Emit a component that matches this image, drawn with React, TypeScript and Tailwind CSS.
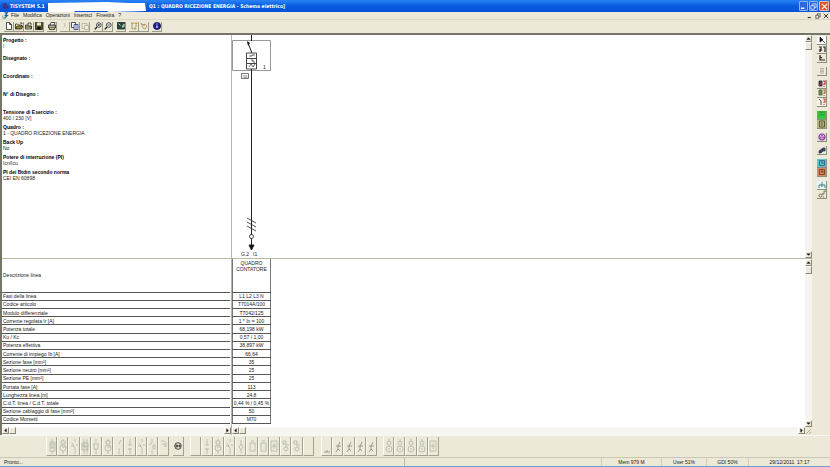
import type { ReactNode } from "react";

const raised =
  "border border-t-white border-l-white border-r-[#8a8778] border-b-[#8a8778] bg-[#ece9d8]";

function Glyph({ children, box = "0 0 8 8", className = "h-2 w-2" }: { children: ReactNode; box?: string; className?: string }) {
  return (
    <svg viewBox={box} className={className} fill="none" stroke="#222" strokeWidth="0.8" aria-hidden="true">
      {children}
    </svg>
  );
}

/* ---------- title bar and menu ---------- */

function TitleBar() {
  return (
    <header className="flex h-3 shrink-0 items-center bg-linear-to-b from-[#2a84f5] via-[#0a5be0] to-[#0552d8] pl-[2px] pr-px font-['DejaVu_Sans_Condensed','DejaVu_Sans',sans-serif] text-[5px] leading-3 font-bold text-white">
      <Glyph className="mr-[1px] h-2 w-[7px]">
        <path d="M1 1h4v3h2v3H2z" fill="#1c2f86" stroke="#3b3f9a" />
        <path d="M2 2l3 4" stroke="#a04a70" />
      </Glyph>
      <span className="w-[37px] whitespace-nowrap">TISYSTEM 5.1</span>
      <svg viewBox="0 0 100 12" className="h-3 w-[100px]" aria-hidden="true">
        <path d="M1 3L60 2L82 3L98 3L99 11L62 12L60 11L28 11L27 12L1 12z" fill="#fff" />
      </svg>
      <h1 className="ml-[2px] whitespace-nowrap">Q1 : QUADRO RICEZIONE ENERGIA - Schema elettrico]</h1>
      <div className="ml-auto flex gap-px">
        <button aria-label="Minimize" className="flex h-[10px] w-[9px] items-center justify-center rounded-[1px] border border-[#8db5f5] bg-[#2c66dc]">
          <Glyph className="h-[7px] w-[7px]"><path d="M1 6h4" stroke="#fff" strokeWidth="1.6" /></Glyph>
        </button>
        <button aria-label="Restore" className="flex h-[10px] w-[9px] items-center justify-center rounded-[1px] border border-[#8db5f5] bg-[#2c66dc]">
          <Glyph className="h-[7px] w-[7px]"><path d="M3 3V1h4v4H5M1 3h4v4H1z" stroke="#fff" /></Glyph>
        </button>
        <button aria-label="Close" className="flex h-[10px] w-[10px] items-center justify-center rounded-[1px] border border-[#f0b9a5] bg-[#dc5230]">
          <Glyph className="h-[7px] w-[7px]"><path d="M1 1l6 6M7 1L1 7" stroke="#fff" strokeWidth="1.3" /></Glyph>
        </button>
      </div>
    </header>
  );
}

const menus = ["File", "Modifica", "Operazioni", "Inserisci", "Finestra", "?"];

function MenuBar() {
  return (
    <nav className="flex h-2 shrink-0 items-center border-b border-[#dad6c2] pl-[2px] pr-px text-[5px] leading-[7px]">
      <Glyph className="mr-[2px] h-[7px] w-[7px]">
        <path d="M3 1h3L4 4h2L3 7" stroke="#1f5aa8" strokeWidth="1.4" />
        <path d="M1 4v3h3" stroke="#2a9a8a" />
      </Glyph>
      <div className="flex gap-[4px]">
        {menus.map((m) => (
          <button key={m} className="whitespace-nowrap">{m}</button>
        ))}
      </div>
      <div className="ml-auto flex gap-[2px]">
        <button aria-label="Minimize document"><Glyph className="h-[6px] w-[6px]"><path d="M1 6h4" strokeWidth="1.4" /></Glyph></button>
        <button aria-label="Restore document"><Glyph className="h-[6px] w-[6px]"><path d="M3 3V1h4v4H5M1 3h4v4H1z" /></Glyph></button>
        <button aria-label="Close document"><Glyph className="h-[6px] w-[6px]"><path d="M1 1l6 6M7 1L1 7" strokeWidth="1.2" /></Glyph></button>
      </div>
    </nav>
  );
}

/* ---------- main toolbar ---------- */

const toolGroups: { name: string; art: ReactNode }[][] = [
  [
    { name: "New", art: <path d="M1.5.5h3l2 2v5h-5zM4.500.5v2h2" fill="#fff" /> },
    { name: "Open", art: <><path d="M.5 7V2h2l1 1h3v1" fill="#f4f0a0" /><path d="M.5 7l1.500-3h6L6.500 7z" fill="#8f8a2a" /><path d="M5 1h2v1" /></> },
    { name: "Close", art: <><path d="M.5 7V3h2l1 1h3v3z" fill="#d8d48a" /><path d="M3 4V1h3v2M1 5h6" /></> },
    { name: "Save", art: <><path d="M.5.5h7v7h-7z" fill="#5b5a1c" /><path d="M2 .5h4v3H2z" fill="#e8e6d8" stroke="none" /><path d="M2.500 5h3v2.500h-3z" fill="#111" /></> },
  ],
  [{ name: "Print", art: <><path d="M2 3l1-2.500h4L6 3" fill="#fff" /><path d="M.5 3h7v3h-7z" fill="#a8a596" /><path d="M1.500 6v1.500h5V6" fill="#d8d070" /></> }],
  [
    { name: "Cut", art: <path d="M3 1l2 4M5 1L3 5M2 6h1M5 6h1" stroke="#c6c2b0" /> },
    { name: "Copy", art: <><path d="M.5.5h4v5h-4z" fill="#fff" /><path d="M3 2.500h4v5H3z" fill="#fff" stroke="#23347c" /><path d="M4 4h2M4 6h2" stroke="#23347c" /></> },
    { name: "Paste", art: <><path d="M1 1.500h5v5H1z" stroke="#b1ad9b" /><path d="M3.500 3.500h4v4h-4z" fill="#efede2" stroke="#b1ad9b" /></> },
  ],
  [
    { name: "Zoom in", art: <><circle cx="4.800" cy="3" r="2.300" fill="#e9f6f4" /><path d="M3 5L.8 7.400" strokeWidth="1.400" /><path d="M3.800 3h2M4.800 2v2" /></> },
    { name: "Zoom out", art: <><circle cx="4.800" cy="3" r="2.300" fill="#e9f6f4" /><path d="M3 5L.8 7.400" strokeWidth="1.400" /><path d="M3.800 3h2" /></> },
  ],
  [{ name: "View", art: <><path d="M.5.500h7v6.500h-7z" fill="#234c40" /><path d="M1.500 1.500l2 2M5 5h2V2z" stroke="#e5e8d8" /></> }],
  [
    { name: "Tree", art: <><path d="M1 1h3M2 1v6h1M5 4h2" stroke="#8c8560" /><path d="M5 1h2v1H5zM4 6h2v1H4z" fill="#dfc32c" stroke="#b49a22" /></> },
    { name: "Links", art: <><path d="M1 1l2 2 2-1 2 2-2 3-2-1z" stroke="#a68a50" /><path d="M3 3h2" stroke="#d45a3a" /></> },
  ],
  [{ name: "Info", art: <><circle cx="4" cy="4" r="3.600" fill="#1b1f8c" stroke="#10145c" /><path d="M4 3.400V6M4 1.600v1" stroke="#fff" strokeWidth="1.200" /></> }],
];

function ToolBar() {
  return (
    <div role="toolbar" aria-label="Standard" className="flex h-[15px] shrink-0 items-center gap-[3px] border-b-2 border-[#77756a] pl-1">
      {toolGroups.map((g, i) => (
        <div key={i} className="flex">
          {g.map((t) => (
            <button key={t.name} aria-label={t.name} className="flex h-[10px] w-[10px] items-center justify-center border-r border-b border-[#9c9987]">
              <Glyph>{t.art}</Glyph>
            </button>
          ))}
        </div>
      ))}
    </div>
  );
}

/* ---------- scroll bars ---------- */

const arrows = {
  left: "M5 2v4L3 4z",
  right: "M3 2v4l2-2z",
  up: "M2 5h4L4 3z",
  down: "M2 3h4L4 5z",
};

function Arrow({ dir }: { dir: keyof typeof arrows }) {
  return (
    <button aria-label={"Scroll " + dir} className={"flex h-[7px] w-[7px] shrink-0 items-center justify-center " + raised}>
      <Glyph className="h-[7px] w-[7px] shrink-0"><path d={arrows[dir]} fill="#111" stroke="#111" strokeWidth="0.4" /></Glyph>
    </button>
  );
}

function HScroll() {
  return (
    <div className="flex h-2 shrink-0 bg-[#f6f5ef]">
      <Arrow dir="left" />
      <div className={"h-[7px] w-[7px] " + raised} />
      <div className="ml-auto"><Arrow dir="right" /></div>
    </div>
  );
}

function VScroll() {
  return (
    <div className="flex w-[7px] shrink-0 flex-col bg-[#f6f5ef]">
      <Arrow dir="up" />
      <div className={"h-2 w-[7px] " + raised} />
      <div className="mt-auto"><Arrow dir="down" /></div>
    </div>
  );
}

/* ---------- project data ---------- */

const headerFields = [
  ["Progetto :", "I"],
  ["Disegnato :", ""],
  ["Coordinato :", ""],
  ["N° di Disegno :", ""],
];

const panelFields = [
  ["Tensione di Esercizio :", "400 / 230 [V]"],
  ["Quadro :", "1 - QUADRO RICEZIONE ENERGIA"],
  ["Back Up", "No"],
  ["Potere di interruzione (PI)", "Icn/Icu"],
  ["PI dei Btdin secondo norma", "CEI EN 60898"],
];

function ProjectInfo() {
  return (
    <dl className="pt-[2px] pl-px text-[5px] leading-[6px]">
      {headerFields.map(([k, v]) => (
        <div key={k} className="h-[18px]">
          <dt className="font-bold text-black">{k}</dt>
          <dd className="text-[#555]">{v}</dd>
        </div>
      ))}
      {panelFields.map(([k, v]) => (
        <div key={k} className="h-[15px]">
          <dt className="font-bold text-black">{k}</dt>
          <dd>{v}</dd>
        </div>
      ))}
    </dl>
  );
}

function Schematic() {
  return (
    <svg viewBox="0 0 60 223" className="h-[223px] w-[60px]" fill="none" stroke="#222" strokeWidth="1" aria-label="Schema" role="img">
      <path d="M.5 5.500h38v30H.5z" stroke="#999" />
      <path d="M19.500 0v6M19.500 16v2M19.500 34v177" />
      <path d="M19.500 17L16 8" />
      <path d="M15 6l3 2-2 3z" fill="#111" stroke="none" />
      <path d="M14.500 18h10v16h-10zM14.500 23.500h10M14.500 28.500h10" stroke="#444" />
      <path d="M17 21h3v-1h3M20 24v2h2v2M17 32l2-3 2 3 2-3" strokeWidth="0.700" />
      <path d="M9.500 38.500h7v5h-7z" stroke="#555" strokeWidth="0.800" />
      <g fill="#222" stroke="none" fontSize="5">
        <text x="11" y="42.500" fontSize="4">55</text>
        <text x="31" y="34">1</text>
        <text x="9" y="221">G.2</text>
        <text x="21" y="221">I1</text>
      </g>
      <path d="M15 183l9 5M15 187l9 5M15 191l9 5" strokeWidth="0.800" />
      <circle cx="19.500" cy="201.500" r="2" fill="#fff" strokeWidth="0.800" />
      <path d="M17 210h5l-2.500 5z" fill="#111" />
    </svg>
  );
}

const rows = [
  ["Fasi della linea", "L1 L2 L3 N"],
  ["Codice articolo", "T7014A/100"],
  ["Modulo differenziale", "T7042/125"],
  ["Corrente regolata Ir [A]", "1 * In = 100"],
  ["Potenza totale", "68,198 kW"],
  ["Ku / Kc", "0,57 / 1,00"],
  ["Potenza effettiva", "38,897 kW"],
  ["Corrente di impiego Ib [A]", "66,64"],
  ["Sezione fase [mm²]", "35"],
  ["Sezione neutro [mm²]", "25"],
  ["Sezione PE [mm²]", "25"],
  ["Portata fase [A]", "113"],
  ["Lunghezza linea [m]", "24,8"],
  ["C.d.T. linea / C.d.T. totale", "0,44 % / 0,45 %"],
  ["Sezione cablaggio di fase [mm²]", "50"],
  ["Codice Morsetti", "M70"],
];

function LabelTable() {
  return (
    <table className="h-[165px] w-full border-collapse text-[5px] leading-[6px]">
      <tbody>
        <tr className="h-[33px] border-b border-[#555]">
          <th scope="row" className="p-0 pl-px text-left align-middle font-normal">Descrizione linea</th>
        </tr>
        {rows.map(([label]) => (
          <tr key={label} className="border-b border-[#555]">
            <th scope="row" className="p-0 pl-px text-left font-normal">{label}</th>
          </tr>
        ))}
      </tbody>
    </table>
  );
}

function ValueTable() {
  return (
    <table className="h-[165px] w-[39px] border-collapse border-x border-[#777] text-center text-[5px] leading-[6px] whitespace-nowrap">
      <tbody>
        <tr className="h-[33px] border-b border-[#555]">
          <td className="p-0 pt-px align-top">QUADRO<br />CONTATORE</td>
        </tr>
        {rows.map(([label, value]) => (
          <tr key={label} className="border-b border-[#555]">
            <td className="p-0">{value}</td>
          </tr>
        ))}
      </tbody>
    </table>
  );
}

/* ---------- side toolbar ---------- */

const sideGroups: { name: string; tone: string; art: ReactNode }[][] = [
  [
    { name: "Select", tone: "bg-white", art: <path d="M2 1v5l3-2zM5 5l2 2" fill="#111" /> },
    { name: "Columns", tone: "", art: <path d="M1 2h2v4M5 2h2v5M2 4v3" strokeWidth="1.200" /> },
    { name: "Branch", tone: "", art: <path d="M2 1v5h2M4 6h3M2 3l2 1" strokeWidth="1.200" /> },
  ],
  [{ name: "List", tone: "", art: <path d="M2 1.500h4M2 3h4M2 4.500h4M2 6h4" stroke="#aaa793" /> }],
  [
    { name: "Verify device", tone: "", art: <><path d="M1 1h3v5H1z" fill="#444a60" /><path d="M5 1h2v3H6v1M6 6v1M1 6l3-3" stroke="#b02a3c" strokeWidth="1.100" /></> },
    { name: "Verify panel", tone: "", art: <><path d="M1 1h3v5H1z" fill="#5f9a4a" stroke="#4a5a34" /><path d="M5 1h2v3H6v1M6 6v1" stroke="#b8503c" strokeWidth="1.100" /></> },
    { name: "Verify line", tone: "bg-[#f6f0e8]", art: <><path d="M1 1l2 2v4" /><path d="M5 1h2v3H6v1M6 6v1" stroke="#b8403c" strokeWidth="1.100" /></> },
  ],
  [
    { name: "Board", tone: "bg-[#36c83c]", art: <path d="M1 5l2-2 2 1 2-1M1 1h6" stroke="#208028" /> },
    { name: "Cabinet", tone: "bg-[#b5b386]", art: <path d="M1.500 1h5v6h-5zM3 3h2M3 5h2" stroke="#4a4920" /> },
  ],
  [{ name: "Selectivity", tone: "bg-[#e6dbe0]", art: <><circle cx="4" cy="4" r="3" stroke="#8a329c" strokeWidth="1.200" /><path d="M2 5l2-3 2 3z" stroke="#8a329c" /></> }],
  [{ name: "Find", tone: "", art: <path d="M1 5l4-3h2v3H5L3 7H1z" fill="#39405e" stroke="#39405e" /> }],
  [
    { name: "Table", tone: "bg-[#5cc4cc]", art: <path d="M1.500 1.500h5v5h-5zM3 4h3M3 3h2" stroke="#1c6074" /> },
    { name: "Catalog", tone: "bg-[#d08a66]", art: <path d="M1.500 1.500h5v5h-5zM3 4h3M3 3h2" stroke="#722c18" /> },
  ],
  [
    { name: "Earth", tone: "bg-[#e5f5f2]", art: <path d="M4 1v5M1 4h6M1 4v3M7 4v3" stroke="#27616a" /> },
    { name: "Options", tone: "", art: <><circle cx="2.500" cy="5.500" r="1.500" stroke="#55533b" /><path d="M4 4h2V1h2M5 7h1" stroke="#55533b" /></> },
  ],
];

function SideTools() {
  return (
    <aside role="toolbar" aria-label="Schema tools" className="flex w-[13px] shrink-0 flex-col gap-1 pt-px">
      {sideGroups.map((g, i) => (
        <div key={i} className="flex flex-col">
          {g.map((t) => (
            <button key={t.name} aria-label={t.name} className={"flex h-[9px] w-[10px] items-center justify-center border-r border-b border-[#8f8c7b] " + t.tone}>
              <Glyph>{t.art}</Glyph>
            </button>
          ))}
        </div>
      ))}
    </aside>
  );
}

/* ---------- symbol palette ---------- */

const symbols: Record<string, string> = {
  breaker: "M4 0v3M2 3h5v9H2zM2 6h5M2 9h5M4 12v3M3 4l3 1M3 8h3",
  round: "M4 0v2M2 2h4v3H2zM4 12v3M7 9a3 3 0 1 1-6 0a3 3 0 1 1 6 0M3 8h3",
  contact: "M5 0v3M2 4l3 5M5 9v6M1 7h3M6 6h2",
  pair: "M3 0v15M6 0v15M1 4h6v7H1zM1 7h6M2 5l4 5",
  tee: "M4 0v4M1 5h6M2 5v5h4V5M4 10v5",
  slash: "M6 1L4 5M4 9v6",
  cross: "M4 0v6M2 6h4M4 9v6M2 10h4",
  open: "M4 0v4L1 6M5 6h2v4H5zM4 11v4",
  arrowed: "M2 2h3l2 2v4M3 5h3v3",
  diamond: "M4 1v4l2 3-2 3-2-3 2-3M4 11v3",
  box: "M2 4h5v8H2zM3 2h3",
  target: "M1 2h6v10H1zM4 4v6M2 7h4",
  link: "M1 2h3v3H1zM5 6h2M6 10a2 2 0 1 1-4 0a2 2 0 1 1 4 0M4 5v3",
  ground: "M4 11v2M1 13h6",
  motor: "M6 3L4 7M2 7h5M4 7v3M4 10l-2 3M4 10l2 2",
  coils: "M4 0v2M6 4a2 2 0 1 1-4 0a2 2 0 1 1 4 0M7 10a3 3 0 1 1-6 0a3 3 0 1 1 6 0M3 10h2",
  none: "",
};

function Palette({ items, width, dark = false }: { items: string[]; width: string; dark?: boolean }) {
  return (
    <div className={"flex h-[19px] " + width}>
      {items.map((s, i) => (
        <button key={i} aria-label={s + " " + (i + 1)} className="flex flex-1 items-center justify-center border-r border-b border-[#a3a08f] border-l border-l-[#fbfaf5]">
          <svg viewBox="0 0 8 15" className="h-[15px] w-2" fill="none" stroke={dark ? "#8a887a" : "#b5b2a1"} strokeWidth="0.8" aria-hidden="true">
            <path d={symbols[s]} />
          </svg>
        </button>
      ))}
    </div>
  );
}

function PaletteBar() {
  return (
    <div role="toolbar" aria-label="Symbols" className="flex h-[22px] shrink-0 items-center border-t border-[#f8f7f0] pl-[46px]">
      <Palette width="w-[123px]" items={["breaker", "round", "contact", "pair", "tee", "round", "slash", "cross", "contact", "open", "arrowed"]} />
      <button aria-label="Group" className="mx-1 flex h-[19px] w-[11px] items-center justify-center border-r border-b border-[#a3a08f]">
        <Glyph><circle cx="4" cy="4" r="3.300" /><path d="M2 3h1.500v2H2zM5 3h1v2H5z" /></Glyph>
      </button>
      <div className="ml-[2px]">
        <Palette width="w-[124px]" items={["none", "cross", "round", "contact", "diamond", "box", "box", "target", "link", "link", "none"]} />
      </div>
      <div className="ml-[7px]">
        <Palette dark width="w-[56px]" items={["ground", "motor", "motor", "motor", "motor"]} />
      </div>
      <div className="ml-[6px]">
        <Palette width="w-[56px]" items={["coils", "coils", "coils", "coils", "target"]} />
      </div>
    </div>
  );
}

function StatusBar() {
  return (
    <footer className="flex h-[10px] shrink-0 items-center border-t border-b border-t-[#c9c6b4] border-b-[#6f9bd0] text-[5px] leading-[8px] whitespace-nowrap">
      <span className="flex-1 border-r border-[#bab7a5] pl-1">Pronto...</span>
      <span className="w-[196px]" />
      <span className="w-[60px] border-l border-[#cfccba] text-center">Mem 979 M</span>
      <span className="w-[45px] border-l border-[#cfccba] text-center">User 51%</span>
      <span className="w-[42px] border-l border-[#cfccba] text-center">GDI 50%</span>
      <span className="w-[82px] border-l border-[#cfccba] text-center">29/12/2011 &nbsp;17:17</span>
    </footer>
  );
}

export default function App() {
  return (
    <div className="flex h-screen flex-col overflow-hidden bg-[#ece9d8] font-['Liberation_Sans',Arial,sans-serif] text-[#1a1a1a]">
      <TitleBar />
      <MenuBar />
      <ToolBar />
      <div className="flex min-h-0 flex-1">
        <main className="flex min-w-0 flex-1 border-l-2 border-[#77756a]">
          <section className="flex w-[230px] shrink-0 flex-col border-r border-[#b9b6a2]">
            <div className="min-h-0 flex-1 border-b border-[#b9b6a2] bg-white"><ProjectInfo /></div>
            <div className="h-[168px] shrink-0 bg-white pr-px"><LabelTable /></div>
            <HScroll />
          </section>
          <section className="flex min-w-0 flex-1 flex-col">
            <div className="flex min-h-0 flex-1 border-b border-[#b9b6a2] bg-white">
              <div className="min-w-0 flex-1"><Schematic /></div>
              <VScroll />
            </div>
            <div className="flex h-[168px] shrink-0 bg-white">
              <div className="min-w-0 flex-1"><ValueTable /></div>
              <VScroll />
            </div>
            <div className="flex">
              <div className="min-w-0 flex-1"><HScroll /></div>
              <svg viewBox="0 0 7 8" className="h-2 w-[7px]" stroke="#aaa793" aria-hidden="true">
                <path d="M1 7l5-5M4 7l2-2" />
              </svg>
            </div>
          </section>
        </main>
        <div className="w-[5px] shrink-0" />
        <SideTools />
      </div>
      <PaletteBar />
      <StatusBar />
    </div>
  );
}
